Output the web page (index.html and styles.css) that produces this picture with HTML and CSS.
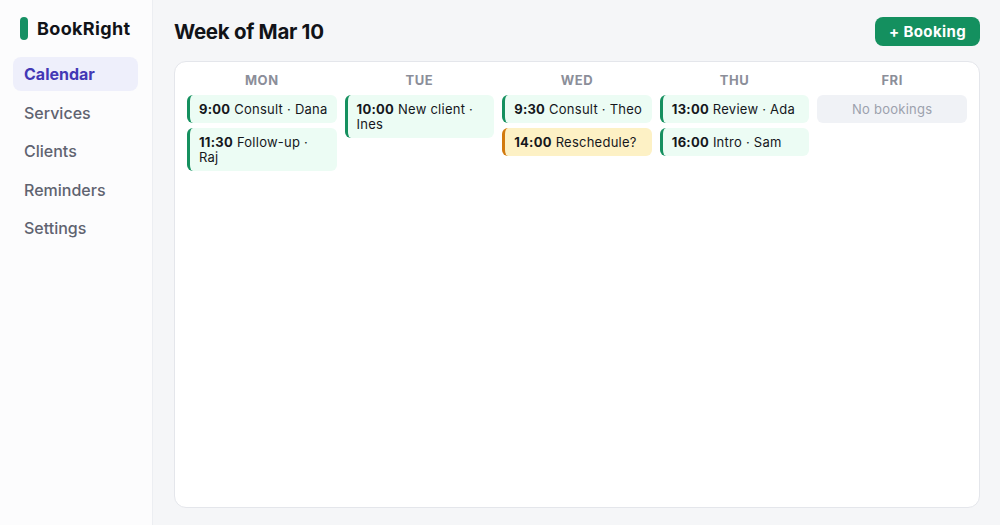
FILE: index.html
```html
<!DOCTYPE html>
<html lang="en">
<head>
<meta charset="utf-8">
<title>BookRight</title>
<link rel="stylesheet" href="styles.css">
</head>
<body>
<div class="app">
  <aside class="sidebar">
    <div class="brand"><span class="brand-mark"></span><span class="brand-name">BookRight</span></div>
    <nav class="nav">
      <a class="nav-item active">Calendar</a>
      <a class="nav-item">Services</a>
      <a class="nav-item">Clients</a>
      <a class="nav-item">Reminders</a>
      <a class="nav-item">Settings</a>
    </nav>
  </aside>
  <main class="main">
    <header class="topbar">
      <h1 class="title">Week of Mar 10</h1>
      <button class="btn-primary">+ Booking</button>
    </header>
    <section class="week">
      <div class="day">
        <div class="day-name">MON</div>
        <div class="event"><b>9:00</b> Consult · Dana</div>
        <div class="event"><b>11:30</b> Follow-up · Raj</div>
      </div>
      <div class="day">
        <div class="day-name">TUE</div>
        <div class="event"><b>10:00</b> New client · Ines</div>
      </div>
      <div class="day">
        <div class="day-name">WED</div>
        <div class="event"><b>9:30</b> Consult · Theo</div>
        <div class="event warn"><b>14:00</b> Reschedule?</div>
      </div>
      <div class="day">
        <div class="day-name">THU</div>
        <div class="event"><b>13:00</b> Review · Ada</div>
        <div class="event"><b>16:00</b> Intro · Sam</div>
      </div>
      <div class="day">
        <div class="day-name">FRI</div>
        <div class="empty">No bookings</div>
      </div>
    </section>
  </main>
</div>
</body>
</html>
```
FILE: styles.css
```css
* { box-sizing: border-box; }
html, body { margin: 0; height: 100%; }
body {
  font-family: Inter, "Noto Sans", "Liberation Sans", sans-serif;
  color: #111318;
  background: #f5f6f8;
}
.app { display: flex; height: 525px; }
.sidebar {
  width: 153px;
  flex: none;
  background: #fcfcfd;
  border-right: 1px solid #eceef2;
  padding: 17px 14px 0 13px;
}
.brand { display: flex; align-items: center; gap: 9px; padding-left: 7px; height: 23px; }
.brand-mark { width: 8px; height: 23px; border-radius: 4px; background: #169064; }
.brand-name { font-size: 18px; font-weight: 700; letter-spacing: 0.35px; }
.nav { display: flex; flex-direction: column; gap: 4.5px; margin-top: 17px; }
.nav-item {
  display: block;
  height: 34px;
  line-height: 34px;
  padding: 0 11px;
  border-radius: 8px;
  font-size: 16px;
  font-weight: 500;
  color: #5f6370;
}
.nav-item.active { background: #eeeffb; color: #4338b5; font-weight: 700; }
.main { flex: 1; padding: 17px 20px 17px 21px; display: flex; flex-direction: column; }
.topbar { display: flex; justify-content: space-between; align-items: center; height: 29px; margin-bottom: 15px; }
.title { margin: 0; font-size: 20.5px; font-weight: 700; letter-spacing: -0.3px; }
.btn-primary {
  font-family: inherit;
  height: 29px;
  width: 105px;
  padding: 0;
  border: 0;
  border-radius: 8px;
  background: #14905f;
  color: #fff;
  font-size: 15px;
  font-weight: 700;
  letter-spacing: 0.4px;
}
.week {
  flex: 1;
  background: #fff;
  border: 1px solid #e4e6eb;
  border-radius: 12px;
  padding: 9px 12px;
  display: grid;
  grid-template-columns: repeat(5, 1fr);
  column-gap: 8px;
  align-content: start;
}
.day { display: flex; flex-direction: column; gap: 5px; }
.day-name {
  text-align: center;
  font-size: 13px;
  font-weight: 700;
  color: #8b8e99;
  letter-spacing: 0.6px;
  line-height: 18px;
  margin-bottom: 1px;
}
.event {
  background: #ecfcf4;
  border-left: 3px solid #15905f;
  border-radius: 6px;
  padding: 6.5px 9px;
  font-size: 13px;
  line-height: 15px;
  letter-spacing: 0.25px;
  color: #15171c;
}
.event b { font-weight: 700; }
.event.warn { background: #fdf1c5; border-left-color: #d27a0f; }
.empty {
  background: #f0f2f6;
  border-radius: 6px;
  height: 28px;
  line-height: 28px;
  text-align: center;
  font-size: 13px;
  letter-spacing: 0.25px;
  color: #9ca1ad;
}
```
